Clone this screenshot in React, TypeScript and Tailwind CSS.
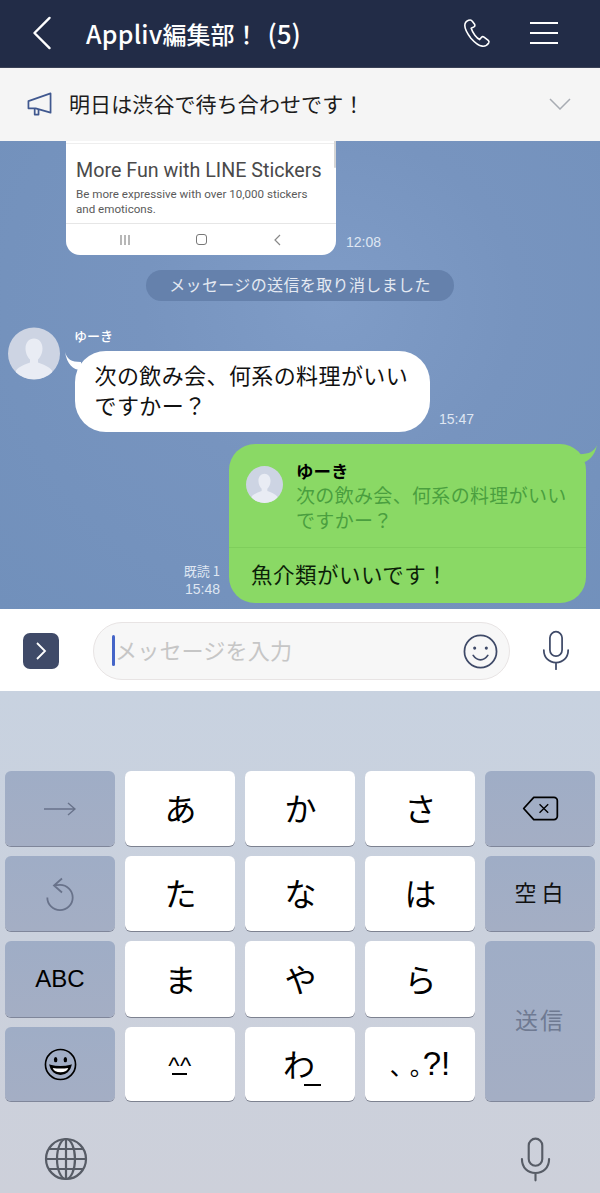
import React from "react";

const jp = "font-['Noto_Sans_CJK_JP','Noto_Sans',sans-serif]";
const latin = "font-['Liberation_Sans',sans-serif]";

function Person({ className }: { className: string }) {
  return (
    <svg viewBox="0 0 52 52" className={className}>
      <circle cx="26" cy="26" r="26" fill="#cdd4e3" />
      <clipPath id="c"><circle cx="26" cy="26" r="26" /></clipPath>
      <g clipPath="url(#c)" fill="#e9ecf4">
        <path d="M26 11c5 0 8.500 4 8.500 10 0 5-2.500 9-4.500 11v3c5 2 11 4 14 8v9H8v-9c3-4 9-6 14-8v-3c-2-2-4.500-6-4.500-11 0-6 3.500-10 8.500-10z" />
      </g>
    </svg>
  );
}

function Mic({ className, color, width }: { className: string; color: string; width: number }) {
  return (
    <svg viewBox="0 0 32 46" fill="none" stroke={color} strokeWidth={width} strokeLinecap="round" className={className}>
      <rect x="9" y="2" width="14" height="28" rx="7" />
      <path d="M2 23c0 9 6 14.500 14 14.500S30 32 30 23M16 37.500V45" />
    </svg>
  );
}

function Key({ children, dark, className = "" }: { children: React.ReactNode; dark?: boolean; className?: string }) {
  return (
    <div
      className={`flex items-center justify-center rounded-[6px] ${
        dark
          ? "bg-gradient-to-b from-[#9fadc6] to-[#a4aec4] shadow-[0_1px_0_#7f869a]"
          : "bg-white shadow-[0_1px_0_#7d8290]"
      } ${className}`}
    >
      {children}
    </div>
  );
}

function Kana({ children }: { children: React.ReactNode }) {
  return <span className="mb-[3px] ml-[1px] text-[32px] leading-none text-black">{children}</span>;
}

export default function App() {
  return (
    <div className={`flex h-[1193px] w-[600px] flex-col overflow-hidden bg-white ${jp}`}>
      {/* header */}
      <div className="flex h-[68px] shrink-0 items-center border-b border-[#3a4156] bg-[#222c47] pb-[2px] pl-[32px] pr-[42px] text-white">
        <svg viewBox="0 0 20 36" className="h-[34px] w-[20px]" fill="none" stroke="#fff" strokeWidth="2.500" strokeLinecap="round" strokeLinejoin="round">
          <path d="M18 2 2 18l16 16" />
        </svg>
        <div className="ml-[34px] flex items-baseline font-medium leading-none">
          <span className="text-[25px] tracking-[0.2px]">Appliv</span>
          <span className="text-[24px]">編集部！</span>
          <span className="ml-[9px] text-[26px]">(5)</span>
        </div>
        <svg viewBox="0 0 30 32" className="ml-auto mr-[2px] h-[30px] w-[30px]" fill="none" stroke="#fff" strokeWidth="1.700" strokeLinejoin="round">
          <path d="M6 2.500c-2.500 1-4 3-4 5.500 0 4 3 9 6.500 13.500 4 4.500 8 8 12 8.500 2.500.3 5.500-1 7-3.500.5-1 .3-2-.5-2.700l-4.500-3.500c-1-.7-2-.6-2.700.2l-2 2.500c-3-1.500-7.500-7-9-12l3-1.500c1-.5 1.200-1.500.8-2.500L10 3.500C9.300 2.300 7.500 2 6 2.500z" />
        </svg>
        <div className="ml-[36px] flex h-[22px] w-[28px] flex-col justify-between">
          <div className="h-[2px] bg-white" />
          <div className="h-[2px] bg-white" />
          <div className="h-[2px] bg-white" />
        </div>
      </div>

      {/* announcement */}
      <div className="flex h-[73px] shrink-0 items-center bg-[#f5f5f5] pb-[2px] pl-[27px] pr-[29px]">
        <svg viewBox="0 0 26 26" className="h-[26px] w-[25px]" fill="none" stroke="#40588f" strokeWidth="1.800" strokeLinejoin="round">
          <path d="M24.500 2v20L9 17.500H1.500V10L24.500 2z" />
          <path d="M8 17.500V24h4v-5.500" />
        </svg>
        <div className="ml-[17px] text-[21px] leading-none tracking-[0.1px] text-[#1c1c1c]">明日は渋谷で待ち合わせです！</div>
        <svg viewBox="0 0 22 12" className="ml-auto h-[12px] w-[22px]" fill="none" stroke="#a8acb3" strokeWidth="1.500">
          <path d="M1 1l10 10L21 1" />
        </svg>
      </div>

      {/* chat */}
      <div className="relative flex h-[468px] shrink-0 flex-col overflow-hidden bg-[#7491bd] bg-[radial-gradient(ellipse_at_55%_35%,#7f9cc7_0%,#7794bf_40%,#7190bb_100%)]">
        {/* image message */}
        <div className="flex items-end">
          <div className="relative ml-[66px] h-[114px] w-[270px] rounded-b-[14px] bg-white pl-[10px] pt-[18px]">
            <div className="absolute left-0 right-0 top-[2px] h-px bg-[#eeeeee]" />
            <div className="absolute right-0 top-0 h-[27px] w-[2px] rounded-b bg-[#d5d5d5]" />
            <div className="font-['Roboto',sans-serif] text-[19.700px] leading-[24px] text-[#4a4a4a]">More Fun with LINE Stickers</div>
            <div className="mt-[4px] font-['Roboto',sans-serif] text-[11.600px] leading-[15px] text-[#5a5a5a]">
              Be more expressive with over 10,000 stickers
              <br />
              and emoticons.
            </div>
            <div className="absolute bottom-0 left-0 right-0 flex h-[32px] items-center justify-around rounded-b-[14px] border-t border-[#e6e6e6] px-[20px] text-[#888]">
              <svg viewBox="0 0 12 12" className="h-[12px] w-[12px]" stroke="#888" strokeWidth="1.200"><path d="M2 1v10M6 1v10M10 1v10" /></svg>
              <div className="h-[11px] w-[11px] rounded-[3px] border border-[#777]" />
              <svg viewBox="0 0 12 12" className="h-[12px] w-[12px]" fill="none" stroke="#888" strokeWidth="1.200"><path d="M8 1 3 6l5 5" /></svg>
            </div>
          </div>
          <div className={`mb-[5px] ml-[10px] ${latin} text-[14px] leading-[16px] text-[#dfe6f2]`}>12:08</div>
        </div>

        {/* system pill */}
        <div className="mt-[15px] flex justify-center">
          <div className="flex h-[31px] w-[308px] items-center justify-center rounded-full bg-[#6581ac] pb-[3px] text-[16px] tracking-[0.37px] text-[#e4e9f2]">
            メッセージの送信を取り消しました
          </div>
        </div>

        {/* incoming */}
        <div className="mt-[26px] flex pl-[8px]">
          <Person className="h-[53px] w-[52px] shrink-0" />
          <div className="ml-[15px]">
            <div className="ml-[-1px] h-[24px] text-[13px] font-medium leading-[18px] text-white">ゆーき</div>
            <div className="flex items-end">
              <div className="relative h-[81px] w-[355px] rounded-[31px] bg-white pl-[19.500px] pt-[9px] text-[22px] leading-[29.500px] tracking-[0.4px] text-[#111]">
                <svg viewBox="0 0 16 18" className="absolute left-[-10px] top-[1px] h-[18px] w-[16px]" fill="#fff"><path d="M0 0c2 7 6 10 16 10v8C8 18 2 12 0 0z" /></svg>
                次の飲み会、何系の料理がいい
                <br />
                ですかー？
              </div>
              <div className={`mb-[5px] ml-[9px] ${latin} text-[14px] leading-[16px] text-[#dfe6f2]`}>15:47</div>
            </div>
          </div>
        </div>

        {/* outgoing */}
        <div className="mt-[12px] flex items-end justify-end pr-[14px]">
          <div className="mb-[5px] mr-[9px] text-right text-[13px] leading-[18px] text-[#dfe6f2]">
            既読 1
            <br />
            <span className={`${latin} text-[14px]`}>15:48</span>
          </div>
          <div className="relative h-[159px] w-[357px] rounded-[26px] bg-[#8ad965]">
            <svg viewBox="0 0 22 18" className="absolute right-[-11px] top-[1px] h-[18px] w-[22px]" fill="#8ad965"><path d="M22 0c-3 7-9 10-22 9v9c12 1 19-5 22-18z" /></svg>
            <div className="flex h-[104px] border-b border-[#7fce5c] pl-[17px] pt-[22px]">
              <Person className="h-[37px] w-[37px] shrink-0" />
              <div className="ml-[13px] mt-[-6px]">
                <div className="text-[17.500px] font-bold leading-[22px] text-black">ゆーき</div>
                <div className="text-[19px] leading-[25px] tracking-[0.33px] text-[#4a9f3f]">
                  次の飲み会、何系の料理がいい
                  <br />
                  ですかー？
                </div>
              </div>
            </div>
            <div className="pl-[22px] pt-[11px] text-[21.500px] leading-[30px] tracking-[0.5px] text-[#0c1f08]">魚介類がいいです！</div>
          </div>
        </div>
      </div>

      {/* input */}
      <div className="flex h-[82px] shrink-0 items-center bg-white pl-[23px] pr-[29px] pt-[2px]">
        <div className="flex h-[36px] w-[36px] items-center justify-center rounded-[7px] bg-[#3f4a68]">
          <svg viewBox="0 0 12 20" className="h-[20px] w-[12px]" fill="none" stroke="#fff" strokeWidth="1.800"><path d="M2 2l8 8-8 8" /></svg>
        </div>
        <div className="ml-[34px] flex h-[58px] w-[417px] items-center rounded-full border border-[#e8e4e4] bg-[#f7f7f7] pl-[18px] pr-[11px]">
          <div className="mb-[2px] h-[31px] w-[3px] rounded-full bg-[#4565c8]" />
          <div className="mb-[4px] text-[22.100px] leading-none tracking-[0.1px] text-[#c6c6c6]">メッセージを入力</div>
          <svg viewBox="0 0 36 36" className="ml-auto h-[35px] w-[35px]" fill="none" stroke="#3f4a68" strokeWidth="1.800" strokeLinecap="round">
            <circle cx="18" cy="18" r="16.500" />
            <circle cx="12" cy="14.500" r="1.600" fill="#3f4a68" stroke="none" />
            <circle cx="24" cy="14.500" r="1.600" fill="#3f4a68" stroke="none" />
            <path d="M10.500 22c2 3 4.500 4.500 7.500 4.500s5.500-1.500 7.500-4.500" />
          </svg>
        </div>
        <Mic className="mb-[2px] ml-auto h-[40px] w-[30px]" color="#3f4a68" width={2} />
      </div>

      {/* keyboard */}
      <div className="flex flex-1 flex-col bg-gradient-to-b from-[#c8d2e0] to-[#cdd0da] px-[5px] pt-[80px]">
        <div className="grid grid-cols-[repeat(5,110px)] grid-rows-[75px_75px_76px_74px] gap-x-[10px] gap-y-[10px]">
          <Key dark>
            <svg viewBox="0 0 32 14" className="h-[14px] w-[32px]" fill="none" stroke="#68728a" strokeWidth="1.400"><path d="M0 7h31M24 1l7 6-7 6" /></svg>
          </Key>
          <Key><Kana>あ</Kana></Key>
          <Key><Kana>か</Kana></Key>
          <Key><Kana>さ</Kana></Key>
          <Key dark>
            <svg viewBox="0 0 38 26" className="h-[25px] w-[37px]" fill="none" stroke="#000" strokeWidth="1.800" strokeLinejoin="round">
              <path d="M12 1.500h21a3.500 3.500 0 0 1 3.500 3.500v16a3.500 3.500 0 0 1-3.500 3.500H12L1.500 13z" />
              <path d="M18 8.500l9 9M27 8.500l-9 9" strokeWidth="1.400" />
            </svg>
          </Key>

          <Key dark>
            <svg viewBox="0 0 28 36" className="h-[36px] w-[28px]" fill="none" stroke="#68728a" strokeWidth="1.800">
              <path d="M16 2.500 8 9.500l8 7M8 9.500c2-.5 4-.7 6-.7A12.700 12.700 0 1 1 1.300 21.500" />
            </svg>
          </Key>
          <Key><Kana>た</Kana></Key>
          <Key><Kana>な</Kana></Key>
          <Key><Kana>は</Kana></Key>
          <Key dark><span className="mb-[5px] ml-[3px] text-[22px] leading-none tracking-[5px] text-[#111]">空白</span></Key>

          <Key dark><span className={`${latin} text-[24px] leading-none text-black`}>ABC</span></Key>
          <Key><Kana>ま</Kana></Key>
          <Key><Kana>や</Kana></Key>
          <Key><Kana>ら</Kana></Key>
          <Key dark className="row-span-2"><span className="mb-[4px] text-[23px] leading-none tracking-[2px] text-[#6f7a92]">送信</span></Key>

          <Key dark>
            <svg viewBox="0 0 34 34" className="h-[33px] w-[33px]" fill="none" stroke="#000" strokeWidth="1.700">
              <circle cx="17" cy="17" r="15.500" />
              <ellipse cx="12" cy="12" rx="1.800" ry="2.800" fill="#000" stroke="none" />
              <ellipse cx="22" cy="12" rx="1.800" ry="2.800" fill="#000" stroke="none" />
              <path d="M6.500 18c3 1 7 1.500 10.500 1.500S24.500 19 27.500 18c-1 5-5 9-10.500 9S7.500 23 6.500 18z" fill="#000" />
              <path d="M9 20.500c5 .8 11 .8 16 0-1 3-4 4.500-8 4.500s-7-1.500-8-4.500z" fill="#fff" stroke="none" />
            </svg>
          </Key>
          <Key>
            <span className={`relative mt-[4px] ${latin} text-[24px] leading-none tracking-[0.5px] text-black`}>
              ^^
              <span className="absolute bottom-[3px] left-[4px] h-[2px] w-[15px] bg-black" />
            </span>
          </Key>
          <Key>
            <span className="relative mb-[3px] ml-[-2px] text-[32px] leading-none text-black">
              わ
              <span className="absolute bottom-[-7px] right-[-6px] h-[2px] w-[17px] bg-black" />
            </span>
          </Key>
          <Key>
            <span className={`mb-[2px] flex items-end ${latin} text-[33px] leading-none text-black`}>
              <span className={`${jp} text-[24px] leading-[30px] tracking-[-4px]`}>、</span>
              <span className={`${jp} text-[24px] leading-[30px] tracking-[-11px]`}>。</span>
              <span>?!</span>
            </span>
          </Key>
        </div>
        <div className="mt-[36px] flex items-start justify-between pl-[39px] pr-[44px]">
          <svg viewBox="0 0 44 44" className="h-[44px] w-[44px]" fill="none" stroke="#575c66" strokeWidth="2.200">
            <circle cx="22" cy="22" r="20" />
            <ellipse cx="22" cy="22" rx="9" ry="20" />
            <path d="M22 2v40M2 22h40M5 12h34M5 32h34" />
          </svg>
          <Mic className="mt-[-1px] h-[46px] w-[31px]" color="#575c66" width={2.200} />
        </div>
      </div>
    </div>
  );
}
